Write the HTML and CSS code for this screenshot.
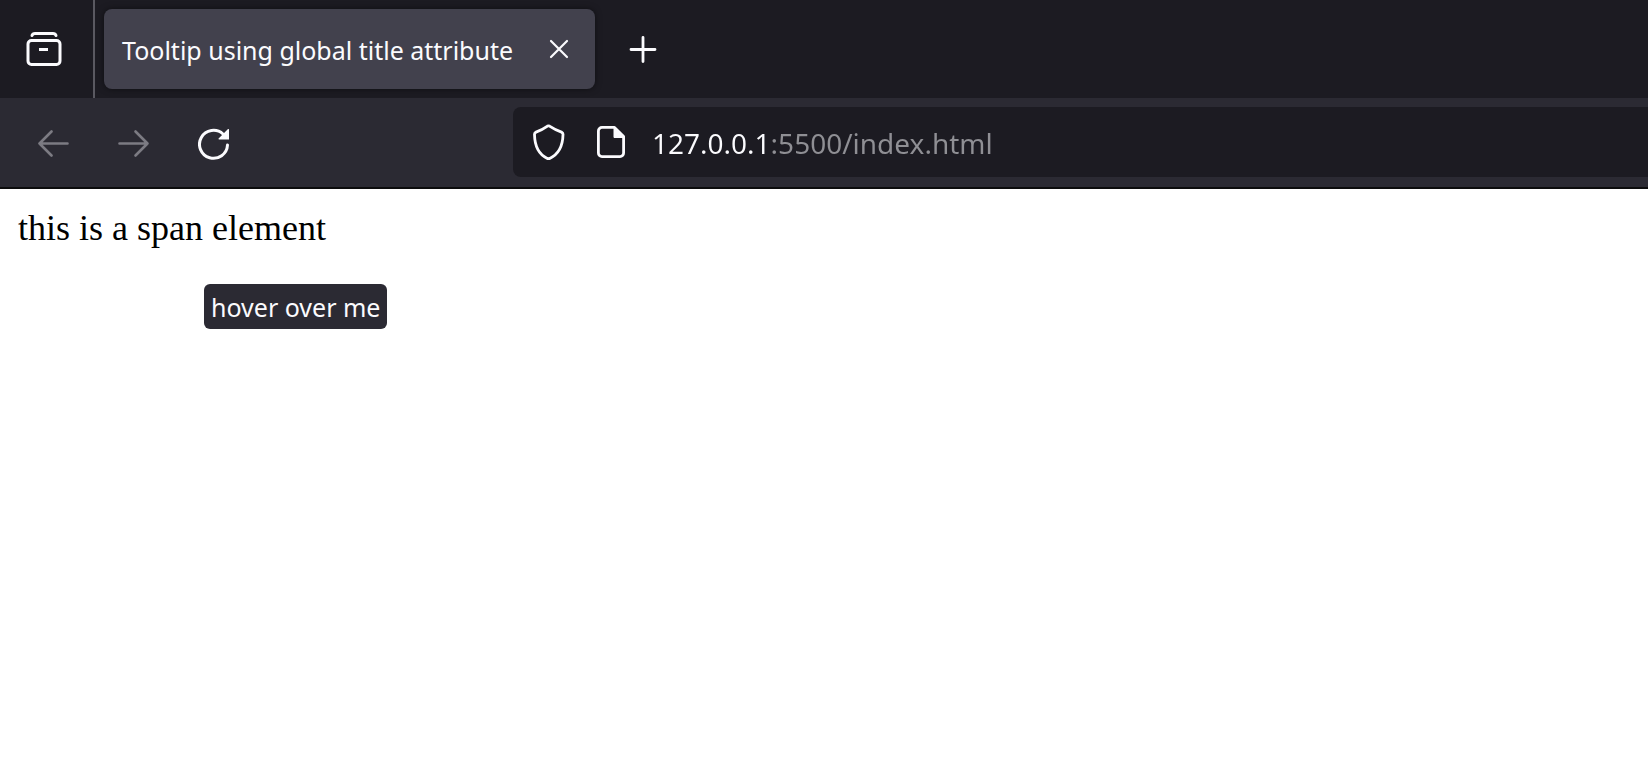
FILE: index.html
```html
<!DOCTYPE html>
<html lang="en">
<head>
<meta charset="utf-8">
<title>Tooltip using global title attribute</title>
<link rel="stylesheet" href="styles.css">
</head>
<body>
<header class="browser">
  <div class="tab-strip">
    <button class="view-button" type="button" aria-label="Firefox View">
      <svg width="36" height="36" viewBox="0 0 36 36" fill="none" stroke="currentColor" stroke-width="3">
        <path d="M6 4.500C6.500 3 7.500 2.500 9 2.500h18C28.500 2.500 29.500 3 30 4.500" stroke-linecap="round"/>
        <rect x="2" y="9.500" width="32" height="24" rx="3.500"/>
        <path d="M13 18.500h9"/>
      </svg>
    </button>
    <div class="tab">
      <span class="tab-title">Tooltip using global title attribute</span>
      <button class="tab-close" type="button" aria-label="Close tab">
        <svg width="20" height="20" viewBox="0 0 20 20" fill="none" stroke="currentColor" stroke-width="2.200" stroke-linecap="round">
          <path d="M2 2l16 16M18 2L2 18"/>
        </svg>
      </button>
    </div>
    <button class="new-tab" type="button" aria-label="New tab">
      <svg width="28" height="28" viewBox="0 0 28 28" fill="none" stroke="currentColor" stroke-width="2.800" stroke-linecap="round">
        <path d="M14 2.500v24M2 14.500h24"/>
      </svg>
    </button>
  </div>
  <div class="toolbar">
    <nav class="nav-buttons" aria-label="History">
      <button class="nav-button nav-button-off" type="button" aria-label="Back">
        <svg width="32" height="32" viewBox="0 0 32 32" fill="none" stroke="currentColor" stroke-width="2.600" stroke-linecap="round" stroke-linejoin="round">
          <path d="M29.500 15.500H1.500M13.500 3.500L1.500 15.500L13.500 27.500"/>
        </svg>
      </button>
      <button class="nav-button nav-button-off" type="button" aria-label="Forward">
        <svg width="32" height="32" viewBox="0 0 32 32" fill="none" stroke="currentColor" stroke-width="2.600" stroke-linecap="round" stroke-linejoin="round">
          <path d="M1.500 15.500h28M17.500 3.500L29.500 15.500L17.500 27.500"/>
        </svg>
      </button>
      <button class="nav-button" type="button" aria-label="Reload">
        <svg width="32" height="32" viewBox="0 0 32 32" fill="none" stroke="currentColor" stroke-width="3" stroke-linecap="round">
          <path d="M29.500 17A14 14 0 1 1 25 6"/>
          <path d="M31 1.500v9.900H21a.6.600 0 0 1-.4-1L30 1.100a.6.600 0 0 1 1 .4z" fill="currentColor" stroke="none"/>
        </svg>
      </button>
    </nav>
    <div class="url-bar">
      <button class="url-button" type="button" aria-label="Tracking protection">
        <svg width="32" height="36" viewBox="0 0 32 36" fill="none" stroke="currentColor" stroke-width="2.800" stroke-linejoin="round">
          <path d="M14.500 2.100Q15.500 1.600 16.500 2.100Q22.500 6 28.500 8.100Q30.100 8.800 30 10.500C29.800 22 25 30.500 16.700 34.400Q15.500 34.900 14.300 34.400C6 30.500 1.700 22 1.500 10.500Q1.400 8.800 3 8.100Q9 6 14.500 2.100Z"/>
        </svg>
      </button>
      <button class="url-button" type="button" aria-label="Site information">
        <svg width="28" height="32" viewBox="0 0 28 32" fill="none" stroke="currentColor" stroke-width="2.800" stroke-linejoin="round">
          <path d="M17.500 1.400H5A3.600 3.600 0 0 0 1.400 5v22A3.600 3.600 0 0 0 5 30.600h18A3.600 3.600 0 0 0 26.600 27V10.500Z"/>
          <path d="M17 1.500v10h9.500Z" fill="currentColor" stroke-width="1"/>
        </svg>
      </button>
      <input class="url-input" type="text" aria-label="Address" value="127.0.0.1:5500/index.html" spellcheck="false">
    </div>
  </div>
</header>
<main class="page">
  <span class="page-text" aria-describedby="tip">this is a span element</span>
  <div class="tooltip" id="tip" role="tooltip">hover over me</div>
</main>
</body>
</html>
```
FILE: styles.css
```css
* {
  box-sizing: border-box;
}

body {
  display: flex;
  flex-direction: column;
  min-height: 100vh;
  margin: 0;
  background: #fff;
  color: #000;
}

button {
  display: flex;
  align-items: center;
  justify-content: center;
  margin: 0;
  padding: 0;
  border: 0;
  background: none;
  color: inherit;
}

svg {
  display: block;
}

.browser {
  background: #1c1b22;
  color: #fbfbfe;
  font-family: "Noto Sans", "Open Sans", sans-serif;
}

.tab-strip {
  display: flex;
  align-items: stretch;
  height: 98px;
}

.view-button {
  width: 95px;
  padding-right: 6px;
  border-right: 2px solid #5a5961;
}

.tab {
  display: flex;
  align-items: center;
  gap: 36px;
  margin: 9px 0 9px 9px;
  padding: 0 26px 0 18px;
  border-radius: 8px;
  background: #42414d;
  box-shadow: 0 0 6px rgba(0, 0, 0, 0.5);
}

.tab-title {
  padding-top: 2px;
  font-size: 25px;
  line-height: 36px;
  white-space: nowrap;
}

.new-tab {
  width: 96px;
}

.toolbar {
  display: flex;
  align-items: center;
  padding: 9px 0 10px 14px;
  border-bottom: 2px solid #0c0c0d;
  background: #2b2a33;
}

.nav-buttons {
  display: flex;
  width: 499px;
}

.nav-button {
  width: 80px;
  height: 64px;
  padding-top: 4px;
}

.nav-button-off {
  color: #7c7b83;
}

.url-bar {
  display: flex;
  flex: 1;
  align-items: center;
  height: 70px;
  padding-left: 20px;
  border-radius: 8px 0 0 8px;
  background: #1c1b22;
}

.url-button {
  margin-right: 32px;
}

.url-button + .url-input {
  margin-left: -5px;
}

.url-input {
  flex: 1;
  min-width: 0;
  padding: 2px 0 0;
  border: 0;
  outline: 0;
  background: linear-gradient(to right, #fbfbfe 118px, #8f8f94 118px);
  background-clip: text;
  -webkit-background-clip: text;
  color: transparent;
  caret-color: #fbfbfe;
  font-family: inherit;
  font-size: 28px;
  line-height: 40px;
}

.page {
  position: relative;
  flex: 1;
  padding: 18px;
}

.page-text {
  font-family: "Liberation Serif", "Times New Roman", serif;
  font-size: 36px;
  line-height: 42px;
}

.tooltip {
  position: absolute;
  top: 95px;
  left: 204px;
  padding: 6px 7px 4px;
  border-radius: 6px;
  background: #2b2a33;
  color: #fbfbfe;
  font-family: "Noto Sans", "Open Sans", sans-serif;
  font-size: 25px;
  line-height: 35px;
  white-space: nowrap;
}
```
